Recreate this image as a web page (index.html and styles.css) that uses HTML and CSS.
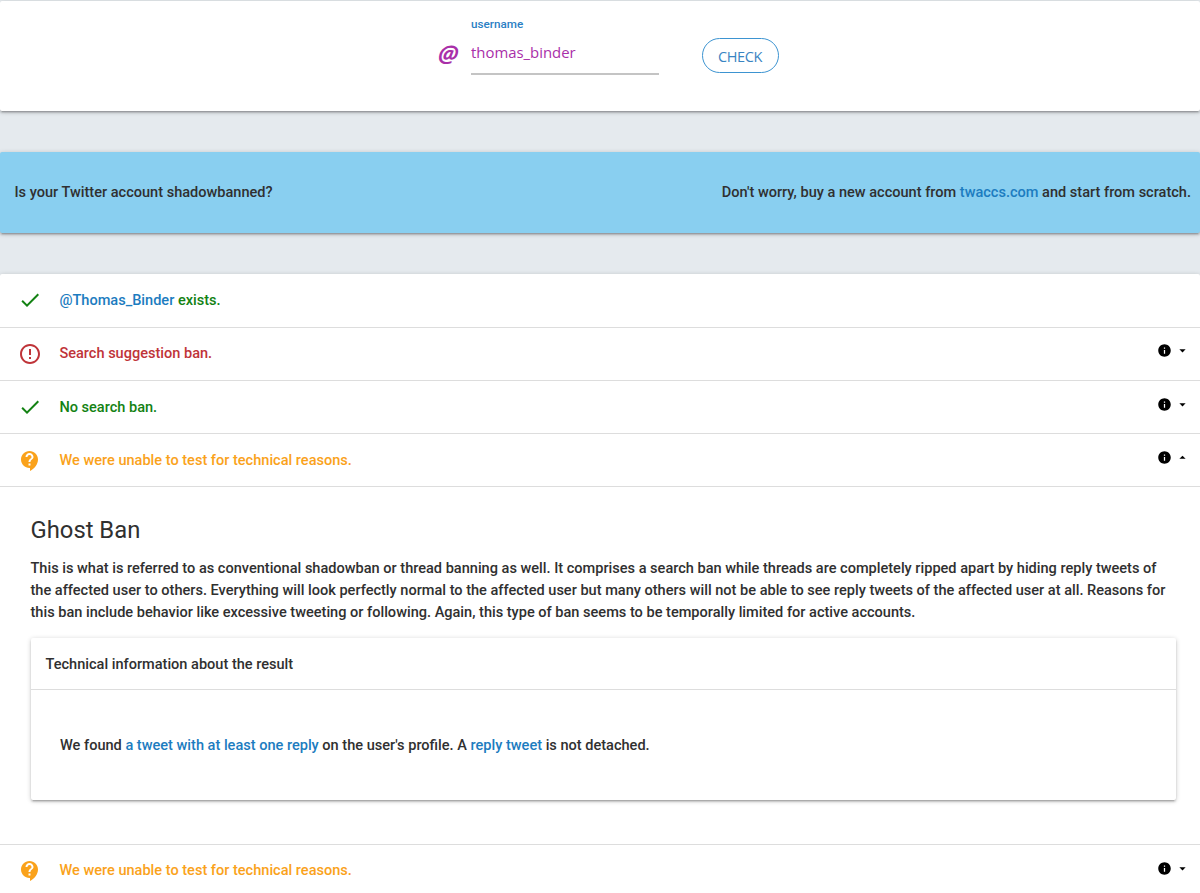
FILE: index.html
```html
<!DOCTYPE html>
<html lang="en">
<head>
    <meta charset="UTF-8">
    <meta name="viewport" content="width=device-width, initial-scale=1.0">
    <title>Shadowban Test</title>
    <link rel="stylesheet" href="styles.css">
</head>
<body>
<svg class="sprite" width="0" height="0">
    <symbol id="check" viewBox="0 0 24 24"><path d="M9 16.17L4.83 12l-1.42 1.41L9 19 21 7l-1.41-1.41z"/></symbol>
    <symbol id="error" viewBox="0 0 24 24"><path d="M11 15h2v2h-2zm0-8h2v6h-2zm.99-5C6.47 2 2 6.48 2 12s4.47 10 9.99 10C17.52 22 22 17.52 22 12S17.52 2 11.99 2zM12 20c-4.42 0-8-3.58-8-8s3.58-8 8-8 8 3.58 8 8-3.58 8-8 8z"/></symbol>
    <symbol id="support" viewBox="0 0 24 24"><path d="M11.5 2C6.81 2 3 5.81 3 10.5S6.81 19 11.5 19h.5v3c4.86-2.34 8-7 8-11.5C20 5.81 16.19 2 11.5 2zm1 14.5h-2v-2h2v2zm0-3.5h-2c0-3.25 3-3 3-5 0-1.1-.9-2-2-2s-2 .9-2 2h-2c0-2.21 1.79-4 4-4s4 1.79 4 4c0 2.5-3 2.75-3 5z"/></symbol>
    <symbol id="info" viewBox="0 0 24 24"><path d="M12 2C6.48 2 2 6.48 2 12s4.48 10 10 10 10-4.48 10-10S17.52 2 12 2zm1 15h-2v-6h2v6zm0-8h-2V7h2v2z"/></symbol>
    <symbol id="down" viewBox="0 0 24 24"><path d="M7 10l5 5 5-5z"/></symbol>
    <symbol id="up" viewBox="0 0 24 24"><path d="M7 14l5-5 5 5z"/></symbol>
</svg>

<form class="card search">
    <span class="prefix">@</span>
    <div class="field">
        <label for="screenName">username</label>
        <input type="text" id="screenName" value="thomas_binder" spellcheck="false">
    </div>
    <button type="button">CHECK</button>
</form>

<div class="card banner">
    <span>Is your Twitter account shadowbanned?</span>
    <span>Don't worry, buy a new account from <a href="#">twaccs.com</a> and start from scratch.</span>
</div>

<main class="card results">
    <div class="row ok">
        <svg class="icon"><use href="#check"/></svg>
        <span><a href="#">@Thomas_Binder</a> exists.</span>
    </div>
    <div class="row ban">
        <svg class="icon"><use href="#error"/></svg>
        <span>Search suggestion ban.</span>
        <div class="more"><svg><use href="#info"/></svg><svg><use href="#down"/></svg></div>
    </div>
    <div class="row ok">
        <svg class="icon"><use href="#check"/></svg>
        <span>No search ban.</span>
        <div class="more"><svg><use href="#info"/></svg><svg><use href="#down"/></svg></div>
    </div>
    <div class="row unknown">
        <svg class="icon"><use href="#support"/></svg>
        <span>We were unable to test for technical reasons.</span>
        <div class="more"><svg><use href="#info"/></svg><svg><use href="#up"/></svg></div>
    </div>
    <div class="details">
        <h2>Ghost Ban</h2>
        <p>This is what is referred to as conventional shadowban or thread banning as well. It comprises a search ban while threads are completely ripped apart by hiding reply tweets of the affected user to others. Everything will look perfectly normal to the affected user but many others will not be able to see reply tweets of the affected user at all. Reasons for this ban include behavior like excessive tweeting or following. Again, this type of ban seems to be temporally limited for active accounts.</p>
        <div class="technical">
            <div class="technical-header">Technical information about the result</div>
            <div class="technical-body">We found <a href="#">a tweet with at least one reply</a> on the user's profile. A <a href="#">reply tweet</a> is not detached.</div>
        </div>
    </div>
    <div class="row unknown">
        <svg class="icon"><use href="#support"/></svg>
        <span>We were unable to test for technical reasons.</span>
        <div class="more"><svg><use href="#info"/></svg><svg><use href="#down"/></svg></div>
    </div>
</main>
</body>
</html>
```
FILE: styles.css
```css
* {
    box-sizing: border-box;
}

body {
    margin: 0;
    padding-top: 1px;
    height: 893px;
    overflow: hidden;
    background-color: #e5eaee;
    color: #303030;
    font-family: Roboto, sans-serif;
    font-size: 14.55px;
    font-weight: 500;
    line-height: 22px;
}

a {
    color: #1c7cc0;
    text-decoration: none;
}

.sprite {
    position: absolute;
}

.card,
.technical {
    background: white;
    border-radius: 2px;
    box-shadow: 0 2px 2px 0 rgba(0, 0, 0, 0.14), 0 3px 1px -2px rgba(0, 0, 0, 0.12), 0 1px 5px 0 rgba(0, 0, 0, 0.2);
}

.search {
    display: flex;
    height: 110px;
    padding-left: 438px;
    font-family: "Open Sans", sans-serif;
}

.prefix {
    width: 33px;
    padding-top: 41px;
    color: #a92fa9;
    font-size: 23px;
    font-style: italic;
    font-weight: 700;
    transform: skewX(-8deg);
}

.field {
    width: 188px;
    padding-top: 15px;
}

.field label {
    display: block;
    height: 17px;
    line-height: 17px;
    color: #2b80c4;
    font-family: Roboto, sans-serif;
    font-size: 11.7px;
}

.field input {
    display: block;
    width: 100%;
    height: 42px;
    padding: 0 0 2px;
    border: 0;
    border-bottom: 2px solid #c4c4c4;
    outline: none;
    color: #a92fa9;
    font-family: "Open Sans", sans-serif;
    font-size: 14.9px;
    font-weight: 500;
}

.search button {
    width: 77px;
    height: 35px;
    margin: 37px 0 0 43px;
    padding: 2px 1px 0 0;
    border: 1px solid #3d94d1;
    border-radius: 18px;
    background: white;
    color: #3984c2;
    font-family: "Open Sans", sans-serif;
    font-size: 14.5px;
    letter-spacing: -0.4px;
    cursor: pointer;
}

.banner {
    display: flex;
    justify-content: space-between;
    align-items: center;
    height: 81px;
    margin: 41px 0;
    padding: 0 9px 0 14.5px;
    background: #89cff0;
}

.row {
    display: flex;
    height: 53.3px;
    padding: 15px 10px 0 18.4px;
    border-bottom: 1px solid #ddd;
}

.row:first-child {
    height: 53.6px;
}

.row > span {
    padding-top: 0.7px;
}

.icon {
    width: 24px;
    height: 24px;
    margin-right: 17px;
    margin-top: -0.7px;
    fill: currentColor;
}

.ok {
    color: #138213;
}

.ban {
    color: #bf3439;
}

.unknown {
    color: #faa21b;
}

.more {
    display: flex;
    gap: 3px;
    margin-left: auto;
}

.more svg {
    width: 15px;
    height: 15px;
    margin-top: 0.9px;
    fill: black;
}

.details {
    height: 357.3px;
    padding: 26.5px 24.5px 0 30.5px;
    border-bottom: 1px solid #ddd;
}

.details h2 {
    margin: 0;
    font-size: 23.8px;
    font-weight: 400;
    line-height: 32px;
}

.details p {
    margin: 12.5px 0 14px;
}

.technical-header {
    height: 52px;
    padding: 16px 15px;
    border-bottom: 1px solid #ddd;
}

.technical-body {
    height: 110px;
    padding: 45px 29.5px;
}
```
